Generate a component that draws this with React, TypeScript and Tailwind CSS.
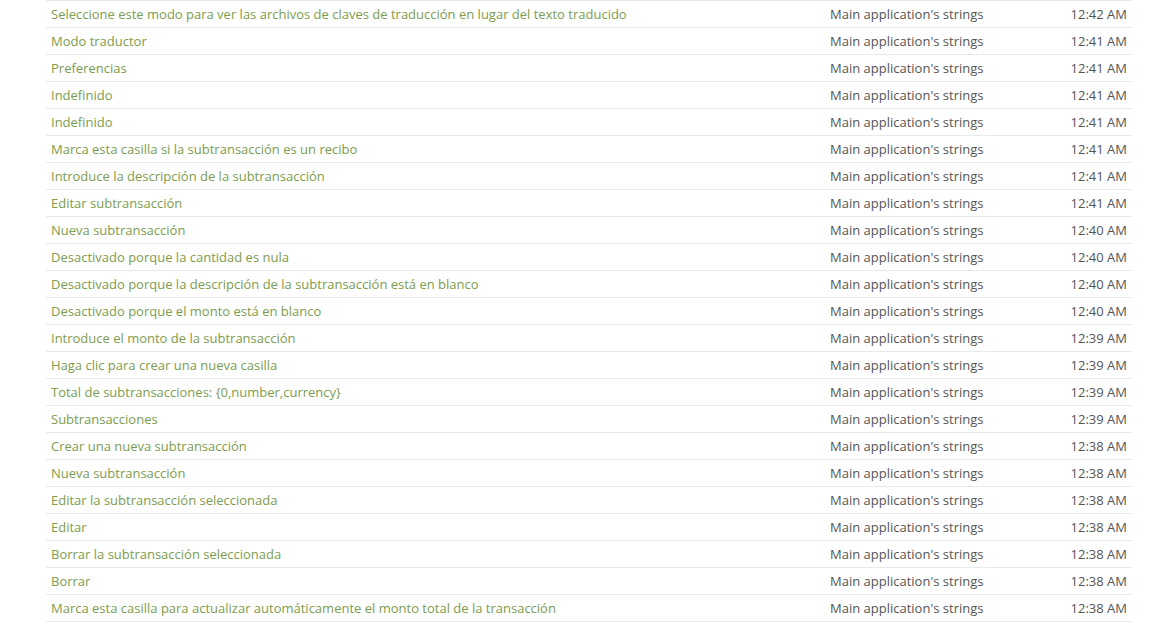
const rows: [string, string][] = [
  ["Seleccione este modo para ver las archivos de claves de traducción en lugar del texto traducido", "12:42 AM"],
  ["Modo traductor", "12:41 AM"],
  ["Preferencias", "12:41 AM"],
  ["Indefinido", "12:41 AM"],
  ["Indefinido", "12:41 AM"],
  ["Marca esta casilla si la subtransacción es un recibo", "12:41 AM"],
  ["Introduce la descripción de la subtransacción", "12:41 AM"],
  ["Editar subtransacción", "12:41 AM"],
  ["Nueva subtransacción", "12:40 AM"],
  ["Desactivado porque la cantidad es nula", "12:40 AM"],
  ["Desactivado porque la descripción de la subtransacción está en blanco", "12:40 AM"],
  ["Desactivado porque el monto está en blanco", "12:40 AM"],
  ["Introduce el monto de la subtransacción", "12:39 AM"],
  ["Haga clic para crear una nueva casilla", "12:39 AM"],
  ["Total de subtransacciones: {0,number,currency}", "12:39 AM"],
  ["Subtransacciones", "12:39 AM"],
  ["Crear una nueva subtransacción", "12:38 AM"],
  ["Nueva subtransacción", "12:38 AM"],
  ["Editar la subtransacción seleccionada", "12:38 AM"],
  ["Editar", "12:38 AM"],
  ["Borrar la subtransacción seleccionada", "12:38 AM"],
  ["Borrar", "12:38 AM"],
  ["Marca esta casilla para actualizar automáticamente el monto total de la transacción", "12:38 AM"],
]

export default function App() {
  return (
    <div className="h-[626px] w-[1160px] bg-white font-['Open_Sans',sans-serif] text-[13px]">
      <div className="ml-[46px] w-[1086px] border-b border-[#e9e9e9]">
        {rows.map(([text, time], i) => (
          <div key={i} className="flex h-[27px] items-center border-t border-[#e9e9e9] pt-[2px]">
            <a className="w-[784px] truncate pl-[5px] text-[#7d9c4e]">{text}</a>
            <span className="flex-1 text-[#555]">Main application's strings</span>
            <span className="pr-[5px] text-right text-[#555]">{time}</span>
          </div>
        ))}
      </div>
    </div>
  )
}
